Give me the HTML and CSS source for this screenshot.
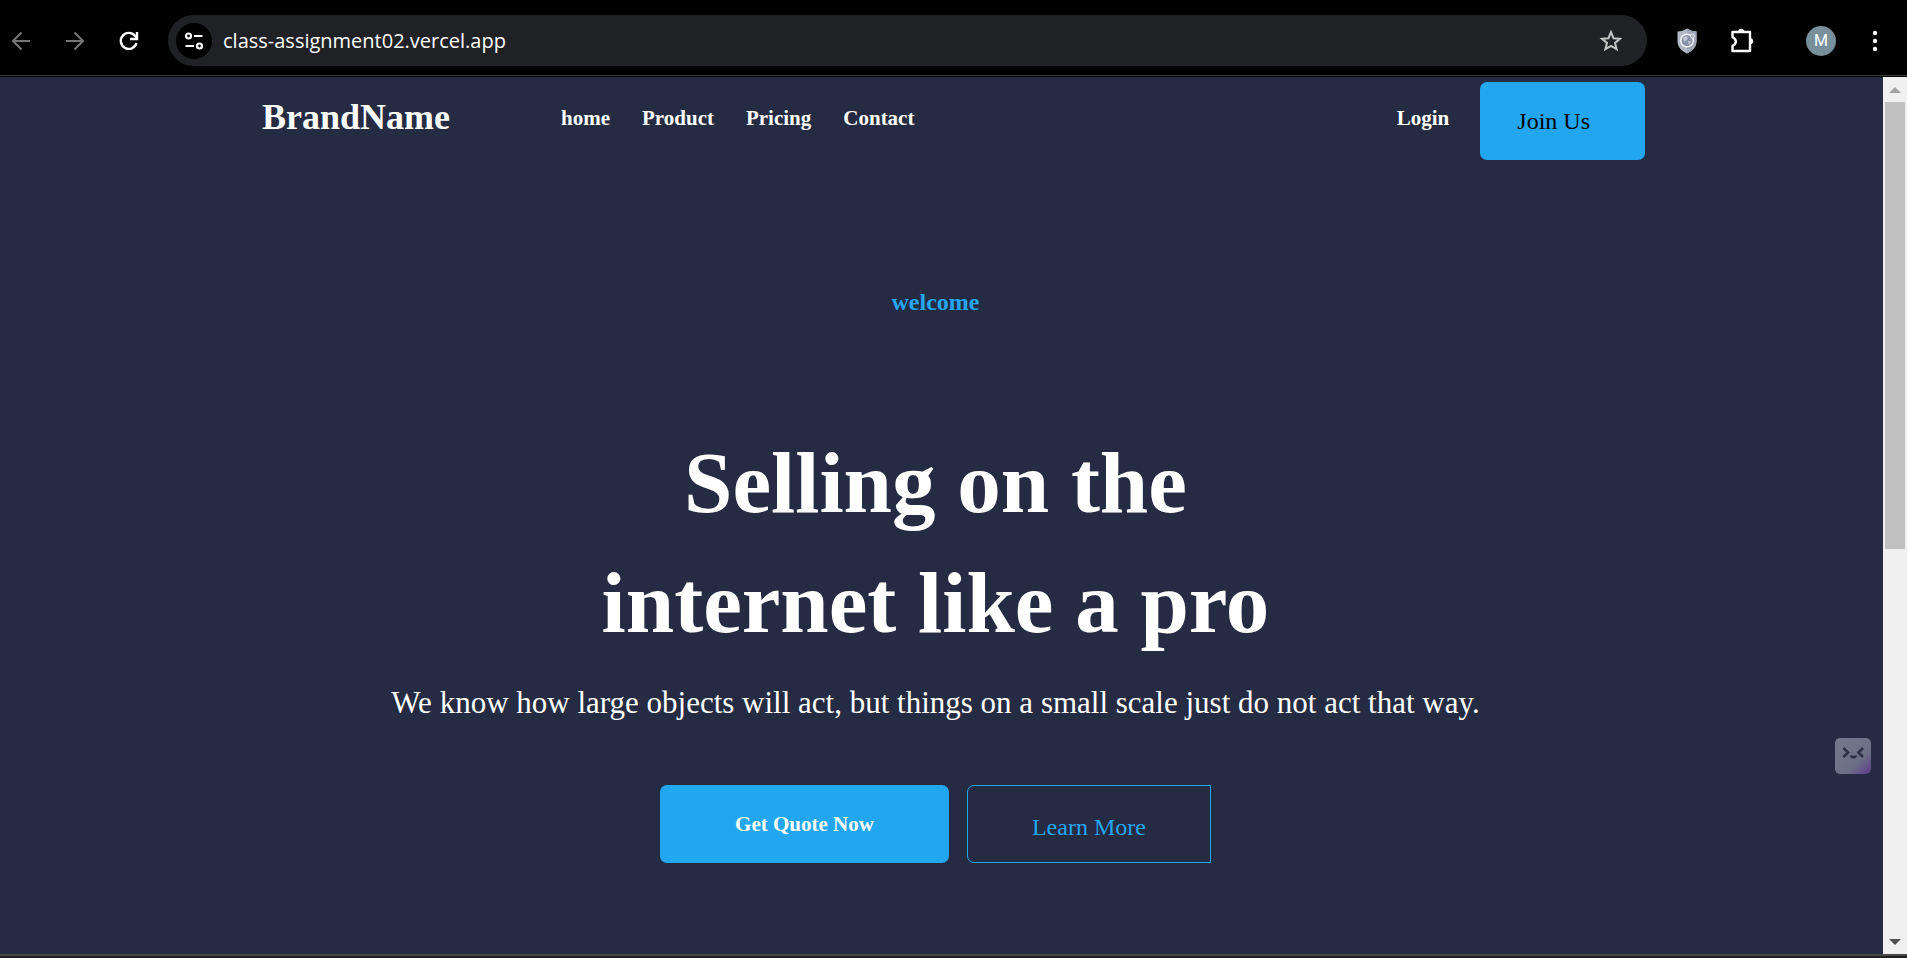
FILE: index.html
```html
<!DOCTYPE html>
<html lang="en">
<head>
<meta charset="utf-8">
<title>BrandName</title>
<link rel="stylesheet" href="styles.css">
</head>
<body>
<header class="toolbar">
  <div class="nav-buttons">
    <button class="icon-btn" aria-label="Back" disabled><svg width="20" height="20" viewBox="0 0 20 20" fill="none" stroke="#767676" stroke-width="2"><path d="M19 10H2M10.500 1.500L2 10l8.500 8.500"/></svg></button>
    <button class="icon-btn" aria-label="Forward" disabled><svg width="20" height="20" viewBox="0 0 20 20" fill="none" stroke="#767676" stroke-width="2"><path d="M1 10h17M9.500 1.500L18 10l-8.500 8.500"/></svg></button>
    <button class="icon-btn" aria-label="Reload"><svg width="20" height="20" viewBox="0 0 20 20" fill="none" stroke="#fff" stroke-width="2.400"><path d="M17.500 12.200A8 8 0 1 1 16.200 5L17.800 7"/><path d="M18 1v7h-7"/></svg></button>
  </div>
  <form class="address">
    <button type="button" class="site-info" aria-label="Site information"><svg width="20" height="20" viewBox="0 0 20 20" fill="none" stroke="#fff" stroke-width="2.200"><circle cx="4.500" cy="5" r="2.500"/><path d="M10 5h8.500M1.500 15H10"/><circle cx="15.500" cy="15" r="2.500"/></svg></button>
    <input class="url" type="text" aria-label="Address" value="class-assignment02.vercel.app">
    <button type="button" class="icon-btn" aria-label="Bookmark"><svg width="24" height="24" viewBox="0 0 24 24" fill="none" stroke="#c4c4c4" stroke-width="2"><path d="M12 3.200l2.500 6 6.500.5-5 4.200 1.600 6.300-5.600-3.400-5.600 3.400L8 13.900 3 9.700l6.500-.5z"/></svg></button>
  </form>
  <div class="actions">
    <button class="icon-btn" aria-label="Shield extension"><svg width="20" height="26" viewBox="0 0 20 26"><path d="M10 .5c3 2 6 3 9.500 3V13c0 6-4 10-9.500 12.500C4.500 23 .5 19 .5 13V3.500c3.500 0 6.500-1 9.500-3z" fill="#b3b8c6"/><path d="M10 .5c3 2 6 3 9.500 3V13c0 6-4 10-9.500 12.500z" fill="#9fa5b6"/><circle cx="10" cy="12.500" r="6.300" fill="#8a92a8" stroke="#f2f3f7" stroke-width="1.600"/><path d="M6 10l3-2 2 2-2 3-2 0zM11 13l3 0-2 4z" fill="#c3c8d4"/><circle cx="15.500" cy="8" r="2" fill="#a3a8b8" stroke="#eceef3"/></svg></button>
    <button class="icon-btn" aria-label="Extensions"><svg width="26" height="26" viewBox="0 0 26 26"><path d="M3.500 4H21v19H3.500v-5c4.500-2.500 4.500-6.500 0-9z" fill="none" stroke="#fff" stroke-width="2.400" stroke-linejoin="round"/><path d="M9.500 4a2.800 2.800 0 0 1 5.600 0zM21 10.500a2.800 2.800 0 0 1 0 5.600z" fill="#fff" stroke="#fff"/></svg></button>
    <button class="avatar" aria-label="Profile">M</button>
    <button class="icon-btn menu" aria-label="Menu"><svg width="6" height="22" viewBox="0 0 6 22" fill="#fff"><circle cx="3" cy="3" r="2.200"/><circle cx="3" cy="11" r="2.200"/><circle cx="3" cy="19" r="2.200"/></svg></button>
  </div>
</header>
<div class="viewport">
  <main class="page">
    <nav class="navbar">
      <a class="brand" href="#">BrandName</a>
      <div class="links"><a href="#">home</a><a href="#">Product</a><a href="#">Pricing</a><a href="#">Contact</a></div>
      <a class="login" href="#">Login</a>
      <button class="join">Join Us</button>
    </nav>
    <section class="hero">
      <h5 class="eyebrow">welcome</h5>
      <h1 class="title">Selling on the<br>internet like a pro</h1>
      <p class="lead">We know how large objects will act, but things on a small scale just do not act that way.</p>
      <div class="cta">
        <button class="quote">Get Quote Now</button>
        <button class="learn">Learn More</button>
      </div>
    </section>
    <button class="helper" aria-label="Assistant"><svg width="36" height="36" viewBox="0 0 36 36" fill="none" stroke="#2b3048" stroke-width="2.600"><path d="M8.500 10l4.500 4.500L8.500 19M28 10l-4.500 4.500L28 19M16 17.500c.5 2.200 4.500 2.200 5 0"/></svg></button>
  </main>
  <div class="scrollbar">
    <svg width="12" height="6" viewBox="0 0 12 6"><path d="M0 6L6 0l6 6z" fill="#a3a3a3"/></svg>
    <div class="track"><div class="thumb"></div></div>
    <svg width="12" height="6" viewBox="0 0 12 6"><path d="M0 0l6 6 6-6z" fill="#505050"/></svg>
  </div>
</div>
<footer class="edge"></footer>
</body>
</html>
```
FILE: styles.css
```css
* { box-sizing: border-box; }
body {
  margin: 0;
  min-height: 100vh;
  display: flex;
  flex-direction: column;
  background: #252b42;
  color: #fff;
  font-family: "Liberation Serif", "Times New Roman", serif;
}
button { border: 0; padding: 0; background: none; color: inherit; font: inherit; }
a { color: inherit; text-decoration: none; }
svg { display: block; }

.toolbar {
  display: flex;
  align-items: center;
  height: 77px;
  padding: 4px 29px 0 11px;
  background: #000;
  box-shadow: inset 0 -1px #000, inset 0 -2px #3c3c3c;
}
.nav-buttons { display: flex; gap: 34px; margin-right: 29px; }
.address {
  flex: 1;
  display: flex;
  align-items: center;
  height: 51px;
  padding: 0 24px 0 8px;
  border-radius: 26px;
  background: #202124;
}
.site-info {
  display: grid;
  place-items: center;
  width: 36px;
  height: 36px;
  border-radius: 50%;
  background: #000;
}
.url {
  flex: 1;
  min-width: 0;
  margin-left: 11px;
  padding: 0;
  border: 0;
  outline: 0;
  background: none;
  color: #fff;
  font: 20px "Open Sans", "Noto Sans", sans-serif;
}
.actions { display: flex; align-items: center; margin-left: 30px; }
.actions .icon-btn { margin-right: 32px; }
.avatar {
  width: 30px;
  height: 30px;
  margin: 0 36px 0 19px;
  border-radius: 50%;
  background: #78909c;
  font: 16px Roboto, sans-serif;
}
.actions .menu { margin-right: 0; }

.viewport { flex: 1; display: flex; }
.page { flex: 1; position: relative; background: #252b42; }

.navbar {
  display: flex;
  padding: 5px 238px 0 262px;
  font-size: 21px;
  font-weight: 700;
  line-height: 36px;
}
.brand { margin-top: 17px; font-size: 36px; }
.links { display: flex; gap: 32px; margin: 18px 0 0 111px; }
.login { margin: 18px 31px 0 auto; }
.join {
  height: 78px;
  padding: 0 55px 0 37px;
  border-radius: 7px;
  background: #23a6f0;
  color: #000;
  font-size: 24px;
  font-weight: 400;
}

.hero {
  display: flex;
  flex-direction: column;
  align-items: center;
  padding: 124px 12px 0 0;
  text-align: center;
}
.eyebrow { margin: 0; color: #23a6f0; font-size: 24px; line-height: 36px; }
.title { margin: 103px 0 0; font-size: 87px; line-height: 120px; }
.lead { margin: 17px 0 0; font-size: 31px; line-height: 45px; }
.cta { display: flex; gap: 18px; margin-top: 60px; }
.cta button { height: 78px; border-radius: 7px; }
.cta .quote { padding: 0 75px; background: #23a6f0; font-size: 21px; font-weight: 700; }
.cta .learn {
  padding: 6px 64px 0;
  border: 1px solid #23a6f0;
  border-radius: 7px 0 0 7px;
  color: #23a6f0;
  font-size: 24px;
}
.helper {
  position: absolute;
  right: 12px;
  bottom: 180px;
  border-radius: 5px;
  background: linear-gradient(135deg, #73788c 0%, #6c7086 65%, #62408c 95%);
}

.scrollbar {
  display: flex;
  flex-direction: column;
  align-items: center;
  width: 24px;
  padding: 10px 0 9px;
  background: #f0f0f0;
}
.track { flex: 1; width: 20px; padding: 9px 0; }
.thumb { height: 54%; background: #c1c1c1; }
.edge { height: 4px; border-top: 2px solid #484848; background: #231f20; }
```
